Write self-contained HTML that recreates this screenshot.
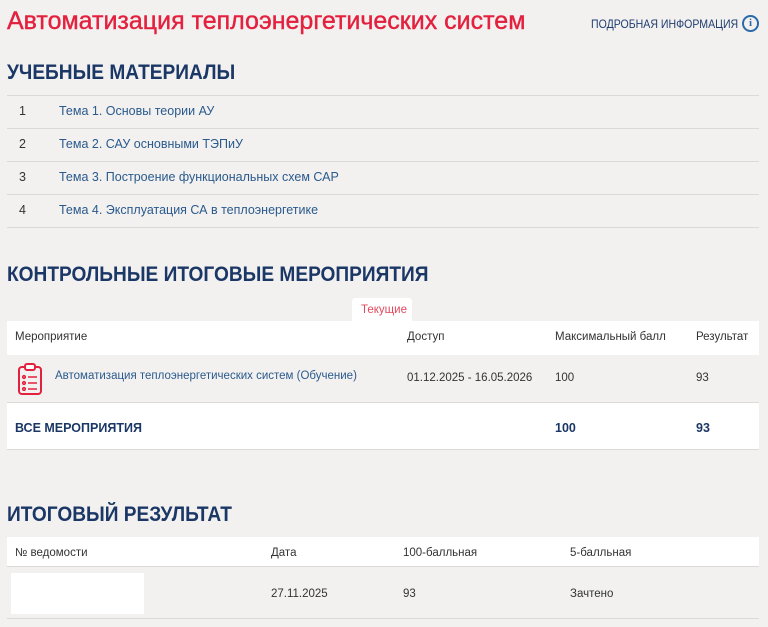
<!DOCTYPE html>
<html><head><meta charset="utf-8"><style>
*{margin:0;padding:0;box-sizing:border-box}
body{width:768px;height:627px;background:#f2f1f0;font-family:"Liberation Sans",sans-serif;position:relative;overflow:hidden;color:#333}
.a{position:absolute;white-space:nowrap}
.h1{left:7px;top:7px;font-size:25px;color:#e3213f;-webkit-text-stroke:0.4px #e3213f}
.info{left:591px;top:17px;font-size:12px;color:#1f3d6e;transform:scaleX(0.88);transform-origin:left top}
.circ{left:742px;top:15px;width:17px;height:17px;border:2px solid #2a6aa8;border-radius:50%;color:#2a6aa8;font-size:11px;font-weight:bold;text-align:center;line-height:13px;font-family:"Liberation Serif",serif}
.h2{left:7px;font-size:21px;font-weight:bold;color:#1b3766;transform:scaleX(0.91);transform-origin:left top}
.line{position:absolute;left:7px;width:752px;height:1px;background:#dcdad8}
.num{left:19px;font-size:12.5px;color:#333}
.lk{left:59px;font-size:12.5px;color:#2a5a8c}
.wbox{position:absolute;background:#fff}
.t{font-size:11.5px;color:#333}
.b{font-size:12.5px;font-weight:bold;color:#1b3766}
</style></head><body>
<div class="a h1">Автоматизация теплоэнергетических систем</div>
<div class="a info">ПОДРОБНАЯ ИНФОРМАЦИЯ</div>
<div class="a circ">i</div>

<div class="a h2" style="top:61px">УЧЕБНЫЕ МАТЕРИАЛЫ</div>
<div class="line" style="top:95px"></div>
<div class="line" style="top:128px"></div>
<div class="line" style="top:161px"></div>
<div class="line" style="top:194px"></div>
<div class="line" style="top:227px"></div>
<div class="a num" style="top:104px">1</div><div class="a lk" style="top:104px">Тема 1. Основы теории АУ</div>
<div class="a num" style="top:137px">2</div><div class="a lk" style="top:137px">Тема 2. САУ основными ТЭПиУ</div>
<div class="a num" style="top:170px">3</div><div class="a lk" style="top:170px">Тема 3. Построение функциональных схем САР</div>
<div class="a num" style="top:203px">4</div><div class="a lk" style="top:203px">Тема 4. Эксплуатация СА в теплоэнергетике</div>

<div class="a h2" style="top:263px">КОНТРОЛЬНЫЕ ИТОГОВЫЕ МЕРОПРИЯТИЯ</div>
<div class="wbox" style="left:352px;top:298px;width:60px;height:24px;border-radius:3px 3px 0 0"></div>
<div class="a" style="left:361px;top:304px;font-size:11.5px;color:#e3485e">Текущие</div>
<div class="wbox" style="left:7px;top:321px;width:752px;height:34px"></div>
<div class="a t" style="left:15px;top:331px">Мероприятие</div>
<div class="a t" style="left:407px;top:331px">Доступ</div>
<div class="a t" style="left:555px;top:331px">Максимальный балл</div>
<div class="a t" style="left:696px;top:331px">Результат</div>
<svg class="a" style="left:17px;top:362px" width="28" height="34" viewBox="0 0 28 34"><rect x="2" y="5" width="22" height="27" rx="3" fill="none" stroke="#e3213f" stroke-width="2"/><rect x="8" y="2" width="10" height="6" rx="2" fill="#fff" stroke="#e3213f" stroke-width="2"/><g stroke="#e3213f" stroke-width="1.6" fill="none"><circle cx="7" cy="15" r="1.3"/><circle cx="7" cy="21" r="1.3"/><circle cx="7" cy="27" r="1.3"/><path d="M11 15h9M11 21h9M11 27h9"/></g></svg>
<div class="a" style="left:55px;top:370px;font-size:11.5px;color:#2a5a8c">Автоматизация теплоэнергетических систем (Обучение)</div>
<div class="a t" style="left:407px;top:372px">01.12.2025 - 16.05.2026</div>
<div class="a t" style="left:555px;top:372px">100</div>
<div class="a t" style="left:696px;top:372px">93</div>
<div class="line" style="top:402px"></div>
<div class="wbox" style="left:7px;top:403px;width:752px;height:47px;border-bottom:1px solid #dcdad8"></div>
<div class="a b" style="left:15px;top:421px">ВСЕ МЕРОПРИЯТИЯ</div>
<div class="a b" style="left:555px;top:421px">100</div>
<div class="a b" style="left:696px;top:421px">93</div>

<div class="a h2" style="top:503px">ИТОГОВЫЙ РЕЗУЛЬТАТ</div>
<div class="wbox" style="left:7px;top:537px;width:752px;height:30px;border-bottom:1px solid #dcdad8"></div>
<div class="a t" style="left:15px;top:547px">№ ведомости</div>
<div class="a t" style="left:271px;top:547px">Дата</div>
<div class="a t" style="left:403px;top:547px">100-балльная</div>
<div class="a t" style="left:570px;top:547px">5-балльная</div>
<div class="wbox" style="left:11px;top:573px;width:133px;height:41px"></div>
<div class="a t" style="left:271px;top:588px">27.11.2025</div>
<div class="a t" style="left:403px;top:588px">93</div>
<div class="a t" style="left:570px;top:588px">Зачтено</div>
<div class="line" style="top:618px"></div>
</body></html>
